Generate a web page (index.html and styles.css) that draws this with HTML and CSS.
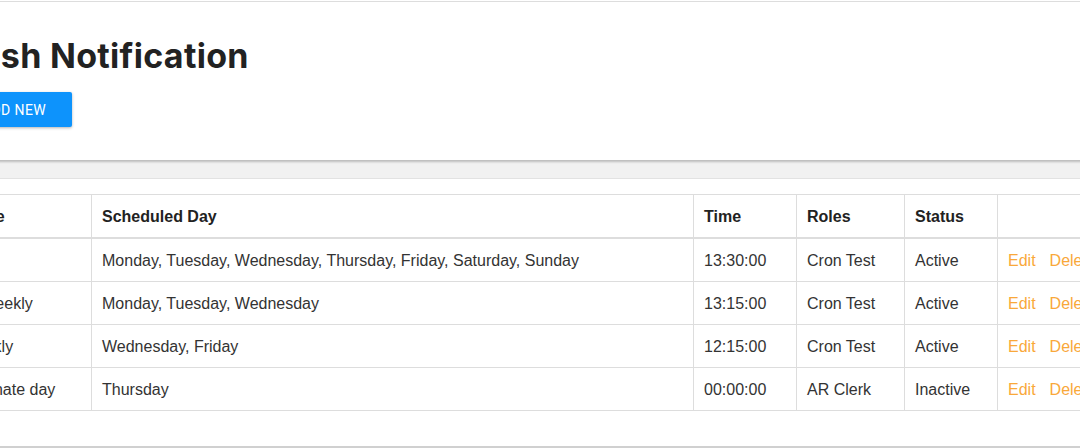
FILE: index.html
```html
<!DOCTYPE html>
<html>
<head>
<meta charset="utf-8">
<title>Push Notification</title>
<link rel="stylesheet" href="styles.css">
</head>
<body>
<div class="page">
  <section class="head-card">
    <h1 class="title">Push Notification</h1>
    <button class="btn-add">ADD NEW</button>
  </section>
  <div class="band"></div>
  <section class="panel">
    <table class="grid">
      <thead>
        <tr>
          <th class="c-name">Name</th>
          <th class="c-day">Scheduled Day</th>
          <th class="c-time">Time</th>
          <th class="c-role">Roles</th>
          <th class="c-status">Status</th>
          <th class="c-act"></th>
        </tr>
      </thead>
      <tbody>
        <tr>
          <td>Daily</td>
          <td>Monday, Tuesday, Wednesday, Thursday, Friday, Saturday, Sunday</td>
          <td>13:30:00</td>
          <td>Cron Test</td>
          <td>Active</td>
          <td class="acts"><a class="lnk">Edit</a><a class="lnk">Delete</a></td>
        </tr>
        <tr>
          <td>Bi-Weekly</td>
          <td>Monday, Tuesday, Wednesday</td>
          <td>13:15:00</td>
          <td>Cron Test</td>
          <td>Active</td>
          <td class="acts"><a class="lnk">Edit</a><a class="lnk">Delete</a></td>
        </tr>
        <tr>
          <td>Weekly</td>
          <td>Wednesday, Friday</td>
          <td>12:15:00</td>
          <td>Cron Test</td>
          <td>Active</td>
          <td class="acts"><a class="lnk">Edit</a><a class="lnk">Delete</a></td>
        </tr>
        <tr>
          <td>Alternate day</td>
          <td>Thursday</td>
          <td>00:00:00</td>
          <td>AR Clerk</td>
          <td>Inactive</td>
          <td class="acts"><a class="lnk">Edit</a><a class="lnk">Delete</a></td>
        </tr>
      </tbody>
    </table>
  </section>
</div>
</body>
</html>
```
FILE: styles.css
```css
html, body {
  margin: 0;
  padding: 0;
  background: #ffffff;
  overflow: hidden;
}
body {
  font-family: "Liberation Sans", Arial, sans-serif;
  color: #333333;
}
.page {
  margin-left: -65px;
  width: 1300px;
  padding-top: 1px;
}
.head-card {
  background: #ffffff;
  border-top: 1px solid #dddddd;
  padding: 33px 24px 33px 22px;
  box-shadow: 0 2px 2px rgba(0, 0, 0, 0.22);
  position: relative;
  z-index: 1;
}
.title {
  margin: 0 0 15px;
  font-family: Inter, "Noto Sans", sans-serif;
  font-weight: 700;
  font-size: 34px;
  line-height: 42px;
  color: #222222;
  letter-spacing: 0.3px;
}
.btn-add {
  display: block;
  margin-left: -1px;
  height: 35px;
  padding: 0 26px;
  border: none;
  border-radius: 2px;
  background: #0d93fc;
  color: #ffffff;
  font-family: Roboto, "Liberation Sans", sans-serif;
  font-size: 14px;
  letter-spacing: 0.4px;
  box-shadow: 0 1px 3px rgba(0, 0, 0, 0.3);
}
.band {
  height: 18px;
  background: #f1f1f1;
}
.panel {
  background: #ffffff;
  border-top: 1px solid #e2e2e2;
  border-bottom: 2px solid #d0d0d0;
  padding: 15px 15px 35px;
}
.grid {
  border-collapse: collapse;
  table-layout: fixed;
  width: 1230px;
  font-size: 16px;
}
.grid th,
.grid td {
  border: 1px solid #dddddd;
  padding: 11px 10px 9px;
  line-height: 22px;
  text-align: left;
  white-space: nowrap;
  overflow: hidden;
}
.grid th {
  font-weight: 700;
  color: #222222;
  border-bottom: 2px solid #dddddd;
}
.c-name { width: 120px; }
.c-day { width: 581px; }
.c-time { width: 82px; }
.c-role { width: 87px; }
.c-status { width: 72px; }
.c-act { width: 200px; }
.lnk {
  color: #f9a83a;
  margin-right: 14px;
  cursor: pointer;
}
```
